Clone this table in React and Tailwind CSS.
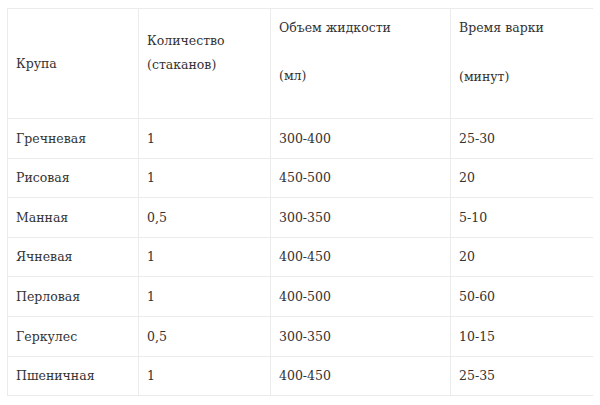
import React from "react";

const rows = [
    ["Гречневая", "1", "300-400", "25-30"],
    ["Рисовая", "1", "450-500", "20"],
    ["Манная", "0,5", "300-350", "5-10"],
    ["Ячневая", "1", "400-450", "20"],
    ["Перловая", "1", "400-500", "50-60"],
    ["Геркулес", "0,5", "300-350", "10-15"],
    ["Пшеничная", "1", "400-450", "25-35"],
];

const txt = "font-['DejaVu_Serif'] text-[12.5px] text-[#333]";

export default function App() {
    return (
        <div className="w-[600px] h-[405px] bg-white pt-[8px] pl-[7px]">
            <div className="grid w-[586px] grid-cols-[130px_131px_179px_142px] grid-rows-[109px_39px_38px_39px_38px_39px_39px_38px] gap-px bg-[#ebebeb] p-px">
                {/* Header */}
                <div className={"bg-white px-[8px] flex items-center leading-[24px] " + txt}>Крупа</div>
                <div className={"bg-white px-[8px] pt-[20px] leading-[24px] " + txt}>
                    <div>Количество</div>
                    <div>(стаканов)</div>
                </div>
                <div className={"bg-white px-[8px] pt-[7px] leading-[24px] " + txt}>
                    <div>Объем жидкости</div>
                    <div className="mt-[24px]">(мл)</div>
                </div>
                <div className={"bg-white px-[8px] pt-[7px] leading-[24px] " + txt}>
                    <div>Время варки</div>
                    <div className="mt-[25px]">(минут)</div>
                </div>

                {rows.map((r) =>
                    r.map((c, j) => (
                        <div key={r[0] + j} className={"bg-white px-[8px] flex items-center leading-[20px] " + txt}>
                            {c}
                        </div>
                    ))
                )}
            </div>
        </div>
    );
}
